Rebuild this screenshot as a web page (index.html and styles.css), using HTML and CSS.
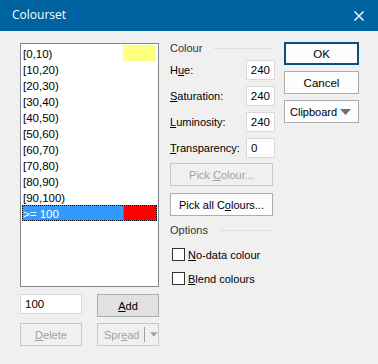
FILE: index.html
```html
<!DOCTYPE html>
<html>
<head>
<meta charset="utf-8">
<link rel="stylesheet" href="styles.css">
</head>
<body>
<div class="dialog">
  <div class="titlebar">
    <span class="title">Colourset</span>
    <svg class="close" width="10" height="10" viewBox="0 0 10 10"><path d="M0.5 0.5 L9.5 9.5 M9.5 0.5 L0.5 9.5" stroke="#fff" stroke-width="1.4"/></svg>
  </div>
  <div class="content">
    <div class="leftcol">
      <div class="listbox">
        <div class="item"><span class="lbl">[0,10)</span><span class="swatch yellow"></span></div>
        <div class="item"><span class="lbl">[10,20)</span></div>
        <div class="item"><span class="lbl">[20,30)</span></div>
        <div class="item"><span class="lbl">[30,40)</span></div>
        <div class="item"><span class="lbl">[40,50)</span></div>
        <div class="item"><span class="lbl">[50,60)</span></div>
        <div class="item"><span class="lbl">[60,70)</span></div>
        <div class="item"><span class="lbl">[70,80)</span></div>
        <div class="item"><span class="lbl">[80,90)</span></div>
        <div class="item"><span class="lbl">[90,100)</span></div>
        <div class="item selected"><span class="lbl">&gt;= 100</span><span class="swatch red"></span></div>
      </div>
      <div class="btnrow first">
        <div class="textbox wide">100</div>
        <div class="btn addbtn"><span><u>A</u>dd</span></div>
      </div>
      <div class="btnrow">
        <div class="btn disabled smallbtn"><span><u>D</u>elete</span></div>
        <div class="btn disabled smallbtn split"><span class="splitlbl">Spr<u>e</u>ad</span><span class="sep"></span><svg width="9" height="5" viewBox="0 0 9 5"><path d="M0 0 H9 L4.5 5 Z" fill="#a0a0a0"/></svg></div>
      </div>
    </div>
    <div class="midcol">
      <div class="group"><span>Colour</span><span class="line"></span></div>
      <div class="field"><span>H<u>u</u>e:</span><div class="textbox num">240</div></div>
      <div class="field"><span><u>S</u>aturation:</span><div class="textbox num">240</div></div>
      <div class="field"><span><u>L</u>uminosity:</span><div class="textbox num">240</div></div>
      <div class="field"><span><u>T</u>ransparency:</span><div class="textbox num left">0</div></div>
      <div class="btn disabled full pick"><span>Pick <u>C</u>olour...</span></div>
      <div class="btn full pickall"><span>Pick all C<u>o</u>lours...</span></div>
      <div class="group options"><span>Options</span><span class="line"></span></div>
      <div class="check first"><span class="box"></span><span><u>N</u>o-data colour</span></div>
      <div class="check"><span class="box"></span><span><u>B</u>lend colours</span></div>
    </div>
    <div class="rightcol">
      <div class="btn side default"><span>OK</span></div>
      <div class="btn side"><span>Cancel</span></div>
      <div class="btn side clip"><span>Clipboard</span><svg class="cliparrow" width="11" height="6" viewBox="0 0 11 6"><path d="M0 0 H11 L5.5 6 Z" fill="#707070"/></svg></div>
    </div>
  </div>
</div>
</body>
</html>
```

FILE: styles.css
```css
* { box-sizing: border-box; }
html, body { margin: 0; padding: 0; }
body {
  width: 378px;
  height: 364px;
  background: #f0f0f0;
  font-family: "Liberation Sans", Arial, sans-serif;
  font-size: 11px;
  color: #000;
  overflow: hidden;
}
.dialog { display: flex; flex-direction: column; height: 364px; }
.titlebar {
  height: 31px;
  background: #0063a1;
  display: flex;
  align-items: center;
  justify-content: space-between;
  padding: 0 14px 0 12px;
  color: #fff;
  font-family: "Open Sans", "Noto Sans", sans-serif;
  font-size: 12px;
}
.title { position: relative; top: -1px; }
.content {
  display: flex;
  padding: 12px 0 0 20px;
}
.leftcol { width: 139px; display: flex; flex-direction: column; }
.listbox {
  width: 139px;
  height: 244px;
  background: #fff;
  border: 1px solid #828790;
  padding: 1px 1px 0 1px;
}
.item {
  height: 16px;
  display: flex;
  align-items: center;
  justify-content: space-between;
  font-size: 11.5px;
  padding-left: 1px;
}
.item .lbl { padding-top: 1px; }
.swatch { width: 33px; height: 16px; margin-right: 1px; }
.yellow { background: #ffff80; }
.item.selected { background: #3399ff; color: #fff; outline: 1px dotted #000; outline-offset: -1px; }
.red { background: #ff0000; border: 1px solid #b05070; margin-right: 0; width: 34px; }
.btnrow { display: flex; justify-content: space-between; margin-top: 6px; }
.btnrow.first { margin-top: 7px; }
.textbox {
  background: #fff;
  border: 1px solid #d9d9d9;
  height: 19px;
  padding: 1px 4px;
  display: flex;
  align-items: center;
  font-size: 11.5px;
}
.textbox.wide { width: 62px; height: 20px; }
.btn {
  border: 1px solid #adadad;
  background: #e1e1e1;
  display: flex;
  align-items: center;
  justify-content: center;
  height: 23px;
  font-size: 11px;
}
.addbtn { width: 62px; }
.smallbtn { width: 62px; }
.btn.disabled { background: #f0f0f0; border-color: #c8c8c8; color: #a0a0a0; }
.split { justify-content: flex-start; padding-left: 6px; }
.split .sep { width: 1px; height: 15px; background: #a0a0a0; margin: 0 6px 0 4px; }
.midcol { width: 105px; margin-left: 11px; display: flex; flex-direction: column; }
.group { display: flex; align-items: center; color: #000; height: 14px; margin-top: -2px; }
.group span:first-child { color: #333; }
.group .line { flex: 1; height: 1px; background: #d5dfe5; margin-left: 12px; margin-right: 2px; }
.field { display: flex; justify-content: space-between; align-items: center; margin-top: 5px; height: 21px; }
.field + .field { margin-top: 5px; }
.group + .field { margin-top: 4px; }
.textbox.num { width: 29px; height: 20px; justify-content: flex-end; }
.textbox.num.left { justify-content: flex-start; }
.btn.full { width: 103px; background: #fdfdfd; border-color: #adadad; }
.btn.full.disabled { background: #f0f0f0; border-color: #c8c8c8; }
.pick { margin-top: 5px; }
.pickall { margin-top: 7px; }
.options { margin-top: 7px; }
.check { display: flex; align-items: center; }
.check.first { margin-top: 11px; }
.check + .check { margin-top: 11px; }
.box { width: 13px; height: 13px; border: 1px solid #333; background: #fff; margin: 0 3px 0 2px; }
.rightcol { margin-left: 9px; width: 75px; display: flex; flex-direction: column; gap: 6px; margin-top: -1px; }
.btn.side { width: 75px; height: 23px; background: #fdfdfd; font-size: 11.5px; }
.btn.default { border: 1px solid #0b4f7a; box-shadow: inset 0 0 0 1px #0b4f7a; background: #fdfdfd; }
.btn.side.clip { justify-content: flex-start; padding: 0 7px 0 5px; font-size: 11px; }
.cliparrow { margin-left: auto; flex: none; }
u { text-decoration: underline; text-underline-offset: 1px; }
```
